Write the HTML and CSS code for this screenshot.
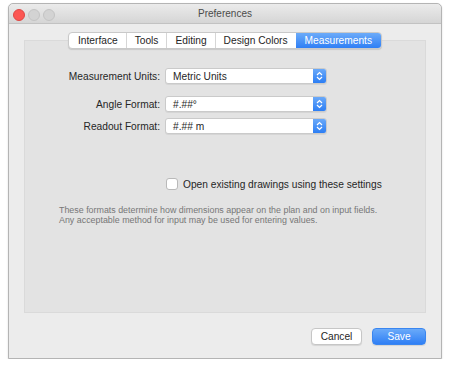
FILE: index.html
```html
<!DOCTYPE html>
<html lang="en">
<head>
    <meta charset="UTF-8">
    <meta name="viewport" content="width=device-width, initial-scale=1.0">
    <title>Preferences</title>
    <link rel="stylesheet" href="styles.css">
</head>
<body>
    <div class="window">
        <div class="titlebar">
            <div class="lights">
                <span class="light close"></span>
                <span class="light"></span>
                <span class="light"></span>
            </div>
            <div class="title">Preferences</div>
        </div>

        <div class="content">
            <div class="tabs">
                <span class="tab">Interface</span>
                <span class="tab">Tools</span>
                <span class="tab">Editing</span>
                <span class="tab">Design Colors</span>
                <span class="tab active">Measurements</span>
            </div>

            <div class="panel">
                <div class="form">
                    <label class="label">Measurement Units:</label>
                    <div class="select">
                        <span class="value">Metric Units</span>
                        <span class="stepper">
                            <svg width="7" height="10" viewBox="0 0 7 10"><path d="M1 4 L3.5 1.5 L6 4 M1 6 L3.5 8.5 L6 6" fill="none" stroke="#fff" stroke-width="1.2"/></svg>
                        </span>
                    </div>

                    <label class="label row-2">Angle Format:</label>
                    <div class="select row-2">
                        <span class="value">#.##°</span>
                        <span class="stepper">
                            <svg width="7" height="10" viewBox="0 0 7 10"><path d="M1 4 L3.5 1.5 L6 4 M1 6 L3.5 8.5 L6 6" fill="none" stroke="#fff" stroke-width="1.2"/></svg>
                        </span>
                    </div>

                    <label class="label">Readout Format:</label>
                    <div class="select">
                        <span class="value">#.## m</span>
                        <span class="stepper">
                            <svg width="7" height="10" viewBox="0 0 7 10"><path d="M1 4 L3.5 1.5 L6 4 M1 6 L3.5 8.5 L6 6" fill="none" stroke="#fff" stroke-width="1.2"/></svg>
                        </span>
                    </div>
                </div>

                <div class="check-row">
                    <span class="checkbox"></span>
                    <span>Open existing drawings using these settings</span>
                </div>

                <p class="help">
                    These formats determine how dimensions appear on the plan and on input fields.<br>
                    Any acceptable method for input may be used for entering values.
                </p>
            </div>

            <div class="actions">
                <button class="btn">Cancel</button>
                <button class="btn primary">Save</button>
            </div>
        </div>
    </div>
</body>
</html>
```

FILE: styles.css
```css
* {
    margin: 0;
    padding: 0;
    box-sizing: border-box;
}

body {
    font-family: "Liberation Sans", Arial, sans-serif;
    font-size: 10.2px;
    color: #262626;
    background: #fff;
    padding: 3px 7px 0 8px;
}

.window {
    width: 434px;
    height: 356px;
    background: #ececec;
    border: 1px solid #b4b4b4;
    border-radius: 5px 5px 0 0;
    box-shadow: 0 1px 2px rgba(0, 0, 0, 0.15);
}

/* Title bar */
.titlebar {
    position: relative;
    height: 20px;
    background: linear-gradient(#ebebeb, #d5d5d5);
    border-bottom: 1px solid #c2c2c2;
    border-radius: 5px 5px 0 0;
    display: flex;
    align-items: center;
    justify-content: center;
}

.lights {
    position: absolute;
    left: 4px;
    top: 5px;
    display: flex;
    gap: 3px;
}

.light {
    width: 12px;
    height: 12px;
    border-radius: 50%;
    background: #d3d3d3;
    border: 1px solid #c4c4c4;
}

.light.close {
    background: #fc5753;
    border-color: #df4744;
}

.title {
    color: #4b4b4b;
    font-size: 10px;
}

/* Content */
.content {
    padding: 8px 15px 0 15px;
}

.tabs {
    position: relative;
    z-index: 2;
    display: flex;
    width: max-content;
    height: 17px;
    margin: 0 auto;
    background: #fff;
    border: 1px solid #c9c9c9;
    border-radius: 4px;
    box-shadow: 0 1px 1px rgba(0, 0, 0, 0.12);
    overflow: hidden;
}

.tab {
    display: flex;
    align-items: center;
    padding: 0 8px;
    color: #262626;
    border-left: 1px solid #d6d6d6;
}

.tab:first-child {
    border-left: none;
    padding-left: 9px;
}

.tab.active {
    color: #fff;
    background: linear-gradient(#6cabf9, #2f7ff5);
    border-left: none;
    padding: 0 9px;
}

.panel {
    height: 273px;
    margin-top: -9px;
    background: #e3e3e3;
    border: 1px solid #dadada;
    padding-top: 27px;
}

.form {
    display: grid;
    grid-template-columns: 135px 162px;
    column-gap: 5px;
    row-gap: 6px;
    align-items: center;
}

.label {
    text-align: right;
    color: #262626;
}

.form .row-2 {
    margin-top: 6px;
}

.select {
    display: flex;
    align-items: center;
    justify-content: space-between;
    height: 16px;
    background: #fff;
    border: 1px solid #cacaca;
    border-radius: 3px;
    box-shadow: 0 1px 0 rgba(0, 0, 0, 0.06);
    overflow: hidden;
}

.select .value {
    padding-left: 7px;
    color: #262626;
}

.stepper {
    display: flex;
    align-items: center;
    justify-content: center;
    width: 13px;
    height: 100%;
    background: linear-gradient(#6aa9f9, #2c7ef4);
}

.check-row {
    display: flex;
    align-items: center;
    gap: 5px;
    margin: 44px 0 0 141px;
    color: #262626;
}

.checkbox {
    width: 12px;
    height: 12px;
    background: #fff;
    border: 1px solid #b9b9b9;
    border-radius: 3px;
}

.help {
    margin: 15px 0 0 34px;
    font-size: 8.9px;
    line-height: 10px;
    color: #777;
}

/* Buttons */
.actions {
    display: flex;
    justify-content: flex-end;
    gap: 10px;
    margin-top: 15px;
}

.btn {
    font-family: "Liberation Sans", Arial, sans-serif;
    font-size: 10.2px;
    height: 17px;
    width: 51px;
    border-radius: 4px;
    border: 1px solid #c6c6c6;
    background: #fff;
    color: #262626;
    box-shadow: 0 1px 1px rgba(0, 0, 0, 0.1);
}

.btn.primary {
    width: 54px;
    color: #fff;
    border-color: #3a86f0;
    background: linear-gradient(#6aaaf9, #2f7ff5);
}
```
